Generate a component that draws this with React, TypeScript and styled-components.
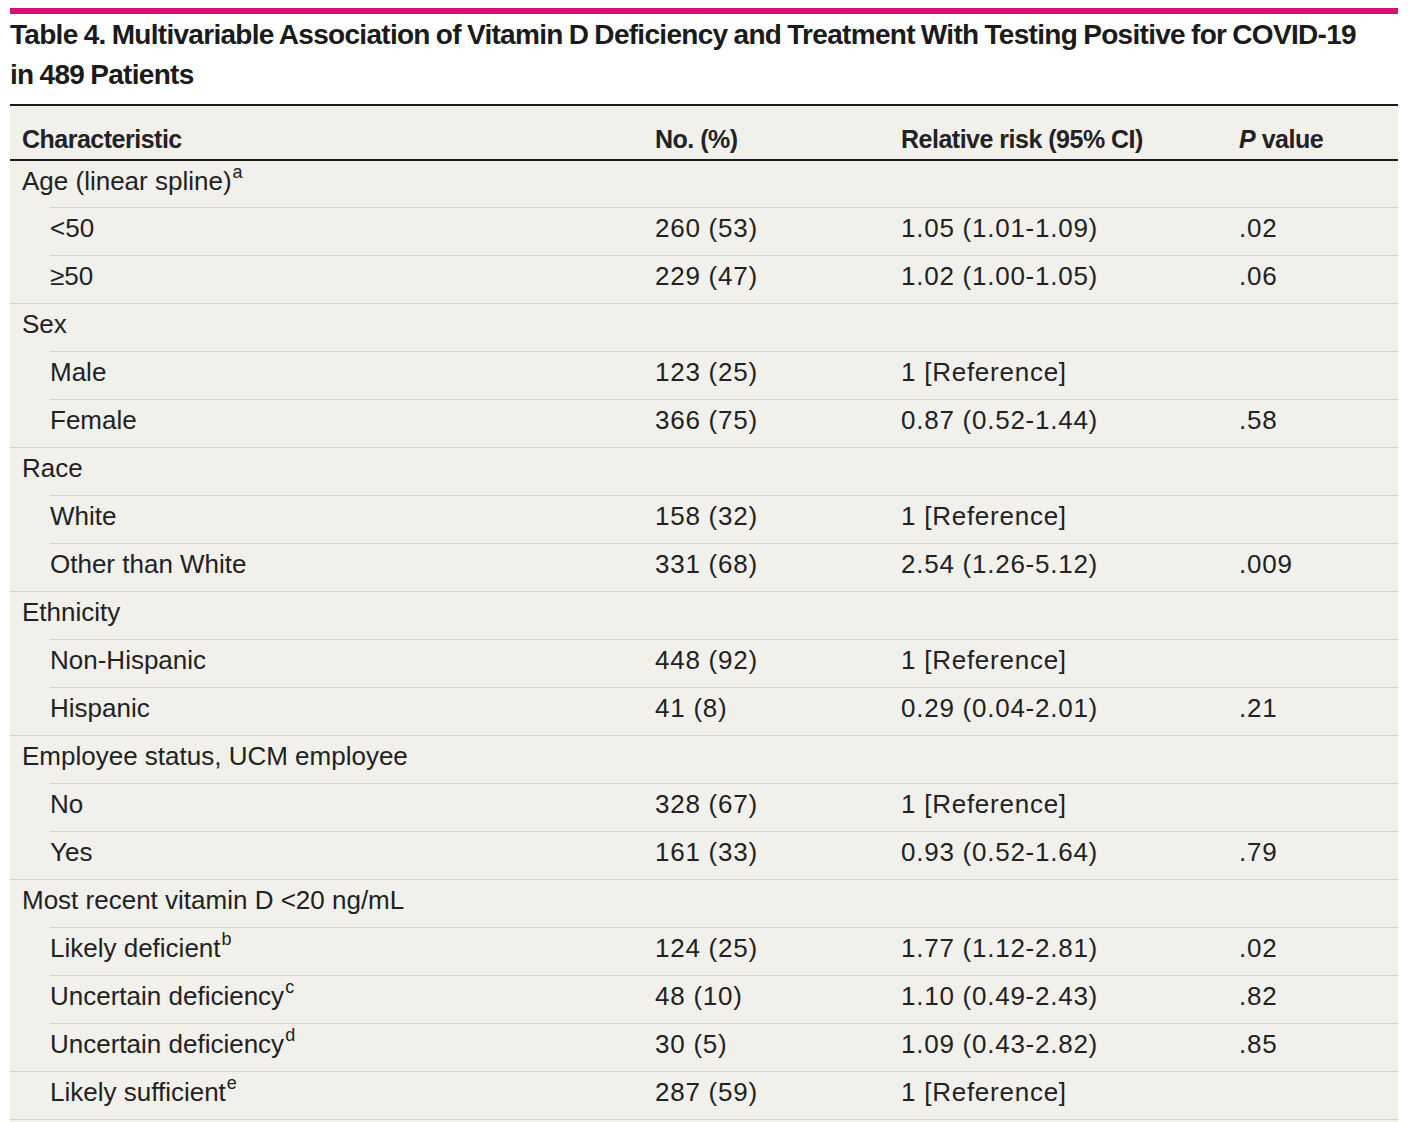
import React from "react";
import styled, { createGlobalStyle } from "styled-components";

type Row = {
  label: string;
  sup?: string;
  sub?: boolean;
  no?: string;
  rr?: string;
  p?: string;
};

const rows: Row[] = [
  { label: "Age (linear spline)", sup: "a" },
  { label: "<50", sub: true, no: "260 (53)", rr: "1.05 (1.01-1.09)", p: ".02" },
  { label: "≥50", sub: true, no: "229 (47)", rr: "1.02 (1.00-1.05)", p: ".06" },
  { label: "Sex" },
  { label: "Male", sub: true, no: "123 (25)", rr: "1 [Reference]" },
  { label: "Female", sub: true, no: "366 (75)", rr: "0.87 (0.52-1.44)", p: ".58" },
  { label: "Race" },
  { label: "White", sub: true, no: "158 (32)", rr: "1 [Reference]" },
  { label: "Other than White", sub: true, no: "331 (68)", rr: "2.54 (1.26-5.12)", p: ".009" },
  { label: "Ethnicity" },
  { label: "Non-Hispanic", sub: true, no: "448 (92)", rr: "1 [Reference]" },
  { label: "Hispanic", sub: true, no: "41 (8)", rr: "0.29 (0.04-2.01)", p: ".21" },
  { label: "Employee status, UCM employee" },
  { label: "No", sub: true, no: "328 (67)", rr: "1 [Reference]" },
  { label: "Yes", sub: true, no: "161 (33)", rr: "0.93 (0.52-1.64)", p: ".79" },
  { label: "Most recent vitamin D <20 ng/mL" },
  { label: "Likely deficient", sup: "b", sub: true, no: "124 (25)", rr: "1.77 (1.12-2.81)", p: ".02" },
  { label: "Uncertain deficiency", sup: "c", sub: true, no: "48 (10)", rr: "1.10 (0.49-2.43)", p: ".82" },
  { label: "Uncertain deficiency", sup: "d", sub: true, no: "30 (5)", rr: "1.09 (0.43-2.82)", p: ".85" },
  { label: "Likely sufficient", sup: "e", sub: true, no: "287 (59)", rr: "1 [Reference]" },
];

const GlobalStyle = createGlobalStyle`
  body {
    margin: 0;
    background: #ffffff;
    font-family: "Liberation Sans", Arial, sans-serif;
    color: #222222;
  }
`;

const Page = styled.div`
  padding: 8px 10px 0;
`;

const AccentBar = styled.div`
  height: 6px;
  background-color: #d8106f;
`;

const Title = styled.h1`
  margin: 0;
  padding: 1px 0 0;
  font-family: "Liberation Sans", sans-serif;
  font-size: 28px;
  line-height: 40px;
  font-weight: 700;
  letter-spacing: -0.7px;
  word-spacing: -1px;
  color: #1b1b1b;
  height: 92px;
  box-sizing: border-box;
  border-bottom: 2px solid #1b1b1b;
  white-space: nowrap;
`;

const Table = styled.div`
  background-color: #f1f0eb;
  padding-bottom: 3px;
`;

const HeadRow = styled.div`
  display: grid;
  grid-template-columns: 633px 246px 338px 1fr;
  height: 53px;
  align-items: end;
  border-bottom: 2px solid #1b1b1b;
`;

const HeadCell = styled.div`
  padding: 0 0 5px 12px;
  font-size: 25px;
  line-height: 30px;
  font-weight: 700;
  letter-spacing: -0.5px;
  color: #222222;

  i {
    font-style: italic;
  }
`;

const BodyRow = styled.div<{ $sub?: boolean; $first?: boolean }>`
  display: grid;
  grid-template-columns: ${(p) => (p.$sub ? "593px" : "633px")} 246px 338px 1fr;
  margin-left: ${(p) => (p.$sub ? "40px" : "0")};
  height: ${(p) => (p.$first ? "39px" : "40px")};
  padding-bottom: 7px;
  align-items: center;
  border-top: ${(p) => (p.$first ? "none" : "1px solid #d6d4ce")};

  &:last-child {
    border-bottom: 1px solid #d6d4ce;
    margin-left: 0;
    grid-template-columns: 633px 246px 338px 1fr;
  }
`;

const Cell = styled.div<{ $indent?: number; $num?: boolean }>`
  padding-left: ${(p) => p.$indent ?? 12}px;
  font-size: 26px;
  line-height: 30px;
  letter-spacing: ${(p) => (p.$num ? "0.75px" : "0")};
  color: #222222;
  white-space: nowrap;

  sup {
    font-size: 18px;
    line-height: 0;
    vertical-align: 12px;
    margin-left: 1px;
  }
`;

export default function App() {
  const last = rows.length - 1;
  return (
    <Page>
      <GlobalStyle />
      <AccentBar />
      <Title>
        Table 4. Multivariable Association of Vitamin D Deficiency and Treatment With Testing Positive for COVID-19
        <br />
        in 489 Patients
      </Title>
      <Table>
        <HeadRow>
          <HeadCell>Characteristic</HeadCell>
          <HeadCell>No. (%)</HeadCell>
          <HeadCell>Relative risk (95% CI)</HeadCell>
          <HeadCell>
            <i>P</i> value
          </HeadCell>
        </HeadRow>
        {rows.map((r, i) => {
          // the final row's rule spans the full table, so its label is shifted instead
          const lastSub = i === last && r.sub;
          return (
            <BodyRow key={i} $sub={r.sub} $first={i === 0}>
              <Cell $indent={lastSub ? 40 : r.sub ? 0 : 12}>
                {r.label}
                {r.sup && <sup>{r.sup}</sup>}
              </Cell>
              <Cell $num>{r.no}</Cell>
              <Cell $num>{r.rr}</Cell>
              <Cell $num>{r.p}</Cell>
            </BodyRow>
          );
        })}
      </Table>
    </Page>
  );
}
